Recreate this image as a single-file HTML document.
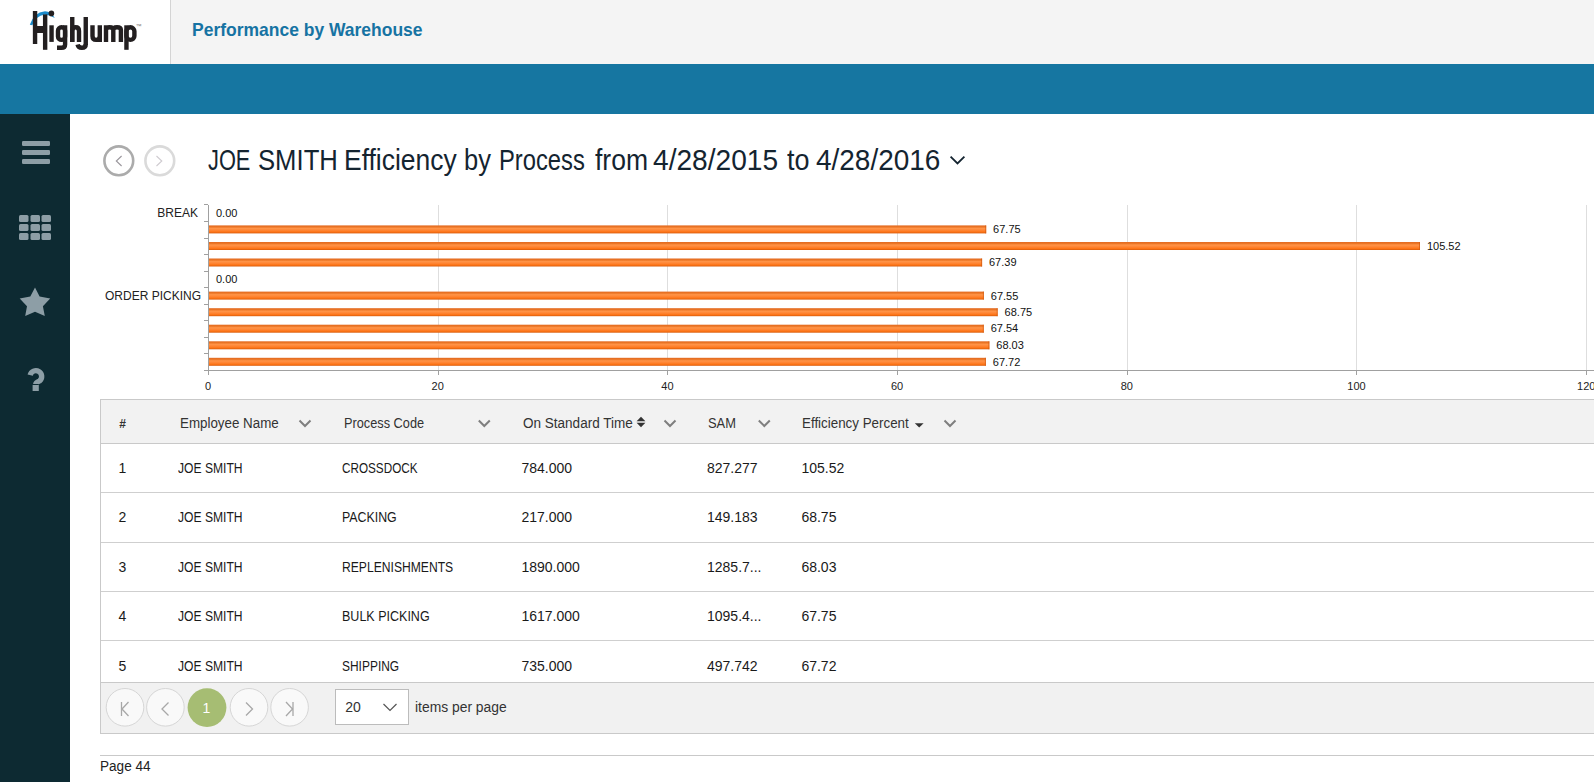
<!DOCTYPE html>
<html><head><meta charset="utf-8">
<style>
*{margin:0;padding:0;box-sizing:border-box}
html,body{width:1594px;height:782px;overflow:hidden;background:#fff;font-family:"Liberation Sans",sans-serif;color:#1b2730}
.abs{position:absolute;white-space:nowrap}
.sx{display:inline-block;transform-origin:0 50%;white-space:nowrap}
#hdr{position:absolute;left:0;top:0;width:1594px;height:64px;background:#f4f4f4}
#logo{position:absolute;left:0;top:0;width:171px;height:64px;background:#fff;border-right:1px solid #d4d4d4}
#band{position:absolute;left:0;top:64px;width:1594px;height:50px;background:#1676a1}
#side{position:absolute;left:0;top:114px;width:70px;height:668px;background:#0d2a32}
.th{font-size:14px;color:#2b2b2b;top:414px}
.td{font-size:14px;color:#1a1a1a}
.hl{position:absolute;height:1px;background:#cfcfcf}
</style></head><body>
<div id="hdr"></div>
<div id="logo">
<svg width="170" height="64" style="position:absolute;left:0;top:0">
 <path d="M29.8 24.8Q33.5 12.6 45 11.2Q51 11.2 54.8 18Q49 14.4 44 14.7Q36.5 15.6 32.3 25.2Z" fill="#1b8bcb"/>
 <g fill="#231f20">
  <rect x="32.85" y="11" width="4.4" height="33"/>
  <rect x="36" y="26" width="8" height="7"/>
  <rect x="42.95" y="14.4" width="4.4" height="35.4"/>
  <rect x="49.35" y="25.3" width="4.4" height="16.6"/>
  
  <rect x="70.05" y="17" width="4.4" height="24.9"/>
  <rect x="83.55" y="17" width="4.4" height="28"/>
  <rect x="124.25" y="25.3" width="4.4" height="24.5"/>
 </g>
 <g fill="none" stroke="#231f20" stroke-width="4.4">
  <rect x="58" y="27.3" width="7.1" height="12.6" rx="3.5"/>
  <path d="M65.1 25.3V44.5Q65.1 47.8 61.5 47.8H57"/>
  <path d="M72.2 41.9V31Q72.2 27.3 75.6 27.3Q79 27.3 79 31V41.9"/>
  <path d="M85.8 44Q85.8 47.8 81.8 47.8Q78.2 47.8 77.6 44.5"/>
  <path d="M92.5 25.3V36Q92.5 39.9 96.1 39.9Q99.8 39.9 99.8 36V25.3M99.8 30V41.9"/>
  <path d="M106 41.9V25.3M106 30Q106 27.3 109.5 27.3Q113.3 27.3 113.3 30V41.9M113.3 30Q113.3 27.3 117 27.3Q120.9 27.3 120.9 30V41.9"/>
  <rect x="126.4" y="27.3" width="8" height="12.6" rx="4"/>
 </g>
  <circle cx="51.4" cy="13.4" r="2.8" fill="#231f20"/>
 <text x="135.6" y="27.6" font-size="6" fill="#777" font-family="Liberation Sans">™</text>
</svg>
</div>
<div class="abs" style="left:191.6px;top:19px;font-size:19px;font-weight:bold;color:#1673a3"><span class="sx" id="t_perf" style="transform:scaleX(0.92)">Performance by Warehouse</span></div>
<div id="band"></div>
<div id="side">
 <svg width="70" height="300" style="position:absolute;left:0;top:0">
  <g fill="#8d9ea6">
   <rect x="22" y="27" width="28" height="5" rx="1.3"/>
   <rect x="22" y="36" width="28" height="5" rx="1.3"/>
   <rect x="22" y="45" width="28" height="5" rx="1.3"/>
   <rect x="19" y="101" width="9.5" height="7" rx="1.5"/>
   <rect x="30.5" y="101" width="9.5" height="7" rx="1.5"/>
   <rect x="41.5" y="101" width="9.5" height="7" rx="1.5"/>
   <rect x="19" y="110" width="9.5" height="7" rx="1.5"/>
   <rect x="30.5" y="110" width="9.5" height="7" rx="1.5"/>
   <rect x="41.5" y="110" width="9.5" height="7" rx="1.5"/>
   <rect x="19" y="119" width="9.5" height="7" rx="1.5"/>
   <rect x="30.5" y="119" width="9.5" height="7" rx="1.5"/>
   <rect x="41.5" y="119" width="9.5" height="7" rx="1.5"/>
   <path d="M35.0 173.5L39.6 182.6L50.2 184.6L42.9 192.3L44.8 202.0L35.0 197.8L25.2 202.0L27.0 192.3L19.7 184.6L30.3 182.6Z"/>
  </g>
 </svg>
 <svg width="70" height="60" style="position:absolute;left:0;top:240px"><path d="M30.2 21.2A5.8 5.8 0 1 1 39.6 26.9Q35.8 28.6 35.8 30" fill="none" stroke="#8d9ea6" stroke-width="5.4"/><rect x="32.6" y="31" width="6.2" height="6" fill="#8d9ea6"/></svg>
</div>

<!-- title -->
<svg width="80" height="40" style="position:absolute;left:100px;top:142px">
 <circle cx="18.8" cy="18.8" r="14.4" fill="none" stroke="#ababab" stroke-width="2.6"/>
 <path d="M21.6 14L16.3 19L21.6 24" fill="none" stroke="#9a969c" stroke-width="1.1"/>
 <circle cx="59.8" cy="18.8" r="14.4" fill="none" stroke="#dadada" stroke-width="2.6"/>
 <path d="M56.5 14L61.8 19L56.5 24" fill="none" stroke="#cfcbd0" stroke-width="1.1"/>
</svg>
<div class="abs" style="left:207.5px;top:144px;font-size:29px;color:#142430"><span class="sx" style="transform:scaleX(0.752)">JOE</span></div>
<div class="abs" style="left:257.5px;top:144px;font-size:29px;color:#142430"><span class="sx" style="transform:scaleX(0.885)">SMITH</span></div>
<div class="abs" style="left:344.1px;top:144px;font-size:29px;color:#142430"><span class="sx" style="transform:scaleX(0.912)">Efficiency</span></div>
<div class="abs" style="left:464.0px;top:144px;font-size:29px;color:#142430"><span class="sx" style="transform:scaleX(0.879)">by</span></div>
<div class="abs" style="left:498.9px;top:144px;font-size:29px;color:#142430"><span class="sx" style="transform:scaleX(0.819)">Process</span></div>
<div class="abs" style="left:594.9px;top:144px;font-size:29px;color:#142430"><span class="sx" style="transform:scaleX(0.914)">from</span></div>
<div class="abs" style="left:653.0px;top:144px;font-size:29px;color:#142430"><span class="sx" style="transform:scaleX(0.97)">4/28/2015</span></div>
<div class="abs" style="left:786.8px;top:144px;font-size:29px;color:#142430"><span class="sx" style="transform:scaleX(0.93)">to</span></div>
<div class="abs" style="left:815.6px;top:144px;font-size:29px;color:#142430"><span class="sx" style="transform:scaleX(0.964)">4/28/2016</span></div>
<svg width="20" height="14" style="position:absolute;left:948px;top:154px">
 <path d="M2.6 2.6L9.5 9.5L16.4 2.6" fill="none" stroke="#142430" stroke-width="1.8"/>
</svg>

<!-- chart -->
<svg id="chart" width="1494" height="200" style="position:absolute;left:100px;top:195px;font-family:'Liberation Sans'">
<defs><linearGradient id="bg" x1="0" y1="0" x2="0" y2="1"><stop offset="0" stop-color="#e26a22"/><stop offset="0.18" stop-color="#ea7424"/><stop offset="0.38" stop-color="#ff9448"/><stop offset="0.62" stop-color="#ff8432"/><stop offset="0.82" stop-color="#fd7416"/><stop offset="1" stop-color="#d65b0c"/></linearGradient></defs><rect x="338" y="10" width="1" height="165" fill="#dedede"/>
<rect x="338" y="175" width="1" height="5" fill="#a0a0a0"/>
<rect x="567" y="10" width="1" height="165" fill="#dedede"/>
<rect x="567" y="175" width="1" height="5" fill="#a0a0a0"/>
<rect x="797" y="10" width="1" height="165" fill="#dedede"/>
<rect x="797" y="175" width="1" height="5" fill="#a0a0a0"/>
<rect x="1027" y="10" width="1" height="165" fill="#dedede"/>
<rect x="1027" y="175" width="1" height="5" fill="#a0a0a0"/>
<rect x="1256" y="10" width="1" height="165" fill="#dedede"/>
<rect x="1256" y="175" width="1" height="5" fill="#a0a0a0"/>
<rect x="1486" y="10" width="1" height="165" fill="#dedede"/>
<rect x="1486" y="175" width="1" height="5" fill="#a0a0a0"/>
<text x="116.0" y="21.5" font-size="11" fill="#111">0.00</text>
<rect x="109" y="30.4" width="777.2" height="8" fill="url(#bg)"/><rect x="885.2" y="30.4" width="1" height="8" fill="#d25a10" opacity="0.7"/>
<text x="893.1" y="38.0" font-size="11" fill="#111">67.75</text>
<rect x="109" y="47.0" width="1211.0" height="8" fill="url(#bg)"/><rect x="1319.0" y="47.0" width="1" height="8" fill="#d25a10" opacity="0.7"/>
<text x="1326.9" y="54.6" font-size="11" fill="#111">105.52</text>
<rect x="109" y="63.5" width="773.1" height="8" fill="url(#bg)"/><rect x="881.1" y="63.5" width="1" height="8" fill="#d25a10" opacity="0.7"/>
<text x="889.0" y="71.1" font-size="11" fill="#111">67.39</text>
<text x="116.0" y="87.7" font-size="11" fill="#111">0.00</text>
<rect x="109" y="96.6" width="774.9" height="8" fill="url(#bg)"/><rect x="882.9" y="96.6" width="1" height="8" fill="#d25a10" opacity="0.7"/>
<text x="890.8" y="105.2" font-size="11" fill="#111">67.55</text>
<rect x="109" y="113.2" width="788.7" height="8" fill="url(#bg)"/><rect x="896.7" y="113.2" width="1" height="8" fill="#d25a10" opacity="0.7"/>
<text x="904.6" y="120.8" font-size="11" fill="#111">68.75</text>
<rect x="109" y="129.7" width="774.8" height="8" fill="url(#bg)"/><rect x="882.8" y="129.7" width="1" height="8" fill="#d25a10" opacity="0.7"/>
<text x="890.7" y="137.3" font-size="11" fill="#111">67.54</text>
<rect x="109" y="146.3" width="780.4" height="8" fill="url(#bg)"/><rect x="888.4" y="146.3" width="1" height="8" fill="#d25a10" opacity="0.7"/>
<text x="896.3" y="153.9" font-size="11" fill="#111">68.03</text>
<rect x="109" y="162.8" width="776.9" height="8" fill="url(#bg)"/><rect x="884.9" y="162.8" width="1" height="8" fill="#d25a10" opacity="0.7"/>
<text x="892.8" y="171.4" font-size="11" fill="#111">67.72</text>
<rect x="104" y="9" width="4" height="1" fill="#a0a0a0"/>
<rect x="104" y="26" width="4" height="1" fill="#a0a0a0"/>
<rect x="104" y="43" width="4" height="1" fill="#a0a0a0"/>
<rect x="104" y="59" width="4" height="1" fill="#a0a0a0"/>
<rect x="104" y="76" width="4" height="1" fill="#a0a0a0"/>
<rect x="104" y="92" width="4" height="1" fill="#a0a0a0"/>
<rect x="104" y="109" width="4" height="1" fill="#a0a0a0"/>
<rect x="104" y="125" width="4" height="1" fill="#a0a0a0"/>
<rect x="104" y="142" width="4" height="1" fill="#a0a0a0"/>
<rect x="104" y="158" width="4" height="1" fill="#a0a0a0"/>
<rect x="104" y="175" width="4" height="1" fill="#a0a0a0"/>
<rect x="108" y="10" width="1" height="170" fill="#a0a0a0"/>
<rect x="108" y="175" width="1400" height="1" fill="#a0a0a0"/>
<text x="108.0" y="195.0" font-size="11" fill="#222" text-anchor="middle">0</text>
<text x="337.7" y="195.0" font-size="11" fill="#222" text-anchor="middle">20</text>
<text x="567.4" y="195.0" font-size="11" fill="#222" text-anchor="middle">40</text>
<text x="797.1" y="195.0" font-size="11" fill="#222" text-anchor="middle">60</text>
<text x="1026.8" y="195.0" font-size="11" fill="#222" text-anchor="middle">80</text>
<text x="1256.5" y="195.0" font-size="11" fill="#222" text-anchor="middle">100</text>
<text x="1486.2" y="195.0" font-size="11" fill="#222" text-anchor="middle">120</text>
<text x="98" y="22" font-size="12" fill="#222" text-anchor="end">BREAK</text>
<text x="101" y="104.5" font-size="12" fill="#222" text-anchor="end">ORDER PICKING</text>
</svg>

<!-- table -->
<div style="position:absolute;left:100px;top:399px;width:1500px;height:335px;border:1px solid #c9c9c9;border-right:none">
 <div style="position:absolute;left:0;top:0;width:100%;height:44px;background:#f2f2f2;border-bottom:1px solid #c9c9c9"></div>
 <div class="hl" style="left:0;top:92px;width:100%"></div>
 <div class="hl" style="left:0;top:142px;width:100%"></div>
 <div class="hl" style="left:0;top:191px;width:100%"></div>
 <div class="hl" style="left:0;top:240px;width:100%"></div>
 <div style="position:absolute;left:0;top:282px;width:100%;height:51px;background:#f1f1f1;border-top:1px solid #c9c9c9"></div>
</div>
<svg width="1000" height="30" style="position:absolute;left:0;top:408px">
 <g fill="none" stroke="#7f7f7f" stroke-width="2">
  <path d="M299.5 12.5L305 18L310.5 12.5"/>
  <path d="M478.8 12.5L484.3 18L489.8 12.5"/>
  <path d="M664.5 12.5L670 18L675.5 12.5"/>
  <path d="M758.8 12.5L764.3 18L769.8 12.5"/>
  <path d="M944.5 12.5L950 18L955.5 12.5"/>
 </g>
 <g fill="#333">
  <path d="M636.6 13.2L641 8.8L645.4 13.2Z"/>
  <path d="M636.6 14.8L641 19.2L645.4 14.8Z"/>
  <path d="M914.8 15.2L919.2 19.6L923.6 15.2Z"/>
 </g>
</svg>
<svg width="420" height="50" style="position:absolute;left:100px;top:683px">
 <g fill="#f9f9f9" stroke="#d6d6d6" stroke-width="1">
  <circle cx="25" cy="24.3" r="18.8"/>
  <circle cx="65.4" cy="24.3" r="18.8"/>
  <circle cx="149" cy="24.3" r="18.8"/>
  <circle cx="189.6" cy="24.3" r="18.8"/>
 </g>
 <circle cx="107" cy="24.6" r="19.4" fill="#a6bd73"/>
 <g fill="none" stroke="#a8a8a8" stroke-width="1.3">
  <path d="M21.5 19V33M28.5 19L22 26L28.5 33"/>
  <path d="M68.5 19.5L62 26L68.5 32.5"/>
  <path d="M146 19.5L152.5 26L146 32.5"/>
  <path d="M193 19V33M186 19L192.5 26L186 33"/>
 </g>
 <rect x="235.5" y="6.5" width="73" height="35" fill="#fff" stroke="#bcbcbc"/>
 <path d="M283.5 21L290 27.5L296.5 21" fill="none" stroke="#555" stroke-width="1.2"/>
</svg>
<!--TABLETEXT-->
<div class="abs" style="left:345.3px;top:698.8px;font-size:14px;line-height:16px;color:#333;font-weight:normal"><span class="sx" style="transform:scaleX(1.000)">20</span></div>
<div class="abs" style="left:414.6px;top:698.5px;font-size:14px;line-height:16px;color:#333;font-weight:normal"><span class="sx" style="transform:scaleX(0.990)">items per page</span></div>
<div class="abs" style="left:202.5px;top:700.4px;font-size:14px;line-height:16px;color:#fff;font-weight:normal"><span class="sx" style="transform:scaleX(1.000)">1</span></div>
<div class="abs" style="left:119.3px;top:415.8px;font-size:12px;line-height:16px;color:#333;font-weight:bold"><span class="sx" style="transform:scaleX(1.000)">#</span></div>
<div class="abs" style="left:179.5px;top:415.1px;font-size:14px;line-height:16px;color:#333;font-weight:normal"><span class="sx" style="transform:scaleX(0.954)">Employee Name</span></div>
<div class="abs" style="left:344.4px;top:415.1px;font-size:14px;line-height:16px;color:#333;font-weight:normal"><span class="sx" style="transform:scaleX(0.911)">Process Code</span></div>
<div class="abs" style="left:522.5px;top:415.1px;font-size:14px;line-height:16px;color:#333;font-weight:normal"><span class="sx" style="transform:scaleX(0.966)">On Standard Time</span></div>
<div class="abs" style="left:707.6px;top:415.1px;font-size:14px;line-height:16px;color:#333;font-weight:normal"><span class="sx" style="transform:scaleX(0.920)">SAM</span></div>
<div class="abs" style="left:802.3px;top:415.1px;font-size:14px;line-height:16px;color:#333;font-weight:normal"><span class="sx" style="transform:scaleX(0.955)">Efficiency Percent</span></div>
<div class="abs" style="left:118.5px;top:460.1px;font-size:14px;line-height:16px;color:#1a1a1a;font-weight:normal"><span class="sx" style="transform:scaleX(1.000)">1</span></div>
<div class="abs" style="left:178.3px;top:460.1px;font-size:14px;line-height:16px;color:#1a1a1a;font-weight:normal"><span class="sx" style="transform:scaleX(0.865)">JOE SMITH</span></div>
<div class="abs" style="left:342.0px;top:460.1px;font-size:14px;line-height:16px;color:#1a1a1a;font-weight:normal"><span class="sx" style="transform:scaleX(0.837)">CROSSDOCK</span></div>
<div class="abs" style="left:521.4px;top:460.1px;font-size:14px;line-height:16px;color:#1a1a1a;font-weight:normal"><span class="sx" style="transform:scaleX(1.000)">784.000</span></div>
<div class="abs" style="left:707.0px;top:460.1px;font-size:14px;line-height:16px;color:#1a1a1a;font-weight:normal"><span class="sx" style="transform:scaleX(1.000)">827.277</span></div>
<div class="abs" style="left:801.4px;top:460.1px;font-size:14px;line-height:16px;color:#1a1a1a;font-weight:normal"><span class="sx" style="transform:scaleX(1.000)">105.52</span></div>
<div class="abs" style="left:118.5px;top:509.1px;font-size:14px;line-height:16px;color:#1a1a1a;font-weight:normal"><span class="sx" style="transform:scaleX(1.000)">2</span></div>
<div class="abs" style="left:178.3px;top:509.1px;font-size:14px;line-height:16px;color:#1a1a1a;font-weight:normal"><span class="sx" style="transform:scaleX(0.865)">JOE SMITH</span></div>
<div class="abs" style="left:342.0px;top:509.1px;font-size:14px;line-height:16px;color:#1a1a1a;font-weight:normal"><span class="sx" style="transform:scaleX(0.883)">PACKING</span></div>
<div class="abs" style="left:521.4px;top:509.1px;font-size:14px;line-height:16px;color:#1a1a1a;font-weight:normal"><span class="sx" style="transform:scaleX(1.000)">217.000</span></div>
<div class="abs" style="left:707.0px;top:509.1px;font-size:14px;line-height:16px;color:#1a1a1a;font-weight:normal"><span class="sx" style="transform:scaleX(1.000)">149.183</span></div>
<div class="abs" style="left:801.4px;top:509.1px;font-size:14px;line-height:16px;color:#1a1a1a;font-weight:normal"><span class="sx" style="transform:scaleX(1.000)">68.75</span></div>
<div class="abs" style="left:118.5px;top:559.1px;font-size:14px;line-height:16px;color:#1a1a1a;font-weight:normal"><span class="sx" style="transform:scaleX(1.000)">3</span></div>
<div class="abs" style="left:178.3px;top:559.1px;font-size:14px;line-height:16px;color:#1a1a1a;font-weight:normal"><span class="sx" style="transform:scaleX(0.865)">JOE SMITH</span></div>
<div class="abs" style="left:342.0px;top:559.1px;font-size:14px;line-height:16px;color:#1a1a1a;font-weight:normal"><span class="sx" style="transform:scaleX(0.866)">REPLENISHMENTS</span></div>
<div class="abs" style="left:521.4px;top:559.1px;font-size:14px;line-height:16px;color:#1a1a1a;font-weight:normal"><span class="sx" style="transform:scaleX(1.000)">1890.000</span></div>
<div class="abs" style="left:707.0px;top:559.1px;font-size:14px;line-height:16px;color:#1a1a1a;font-weight:normal"><span class="sx" style="transform:scaleX(1.000)">1285.7...</span></div>
<div class="abs" style="left:801.4px;top:559.1px;font-size:14px;line-height:16px;color:#1a1a1a;font-weight:normal"><span class="sx" style="transform:scaleX(1.000)">68.03</span></div>
<div class="abs" style="left:118.5px;top:608.1px;font-size:14px;line-height:16px;color:#1a1a1a;font-weight:normal"><span class="sx" style="transform:scaleX(1.000)">4</span></div>
<div class="abs" style="left:178.3px;top:608.1px;font-size:14px;line-height:16px;color:#1a1a1a;font-weight:normal"><span class="sx" style="transform:scaleX(0.865)">JOE SMITH</span></div>
<div class="abs" style="left:342.0px;top:608.1px;font-size:14px;line-height:16px;color:#1a1a1a;font-weight:normal"><span class="sx" style="transform:scaleX(0.894)">BULK PICKING</span></div>
<div class="abs" style="left:521.4px;top:608.1px;font-size:14px;line-height:16px;color:#1a1a1a;font-weight:normal"><span class="sx" style="transform:scaleX(1.000)">1617.000</span></div>
<div class="abs" style="left:707.0px;top:608.1px;font-size:14px;line-height:16px;color:#1a1a1a;font-weight:normal"><span class="sx" style="transform:scaleX(1.000)">1095.4...</span></div>
<div class="abs" style="left:801.4px;top:608.1px;font-size:14px;line-height:16px;color:#1a1a1a;font-weight:normal"><span class="sx" style="transform:scaleX(1.000)">67.75</span></div>
<div class="abs" style="left:118.5px;top:658.1px;font-size:14px;line-height:16px;color:#1a1a1a;font-weight:normal"><span class="sx" style="transform:scaleX(1.000)">5</span></div>
<div class="abs" style="left:178.3px;top:658.1px;font-size:14px;line-height:16px;color:#1a1a1a;font-weight:normal"><span class="sx" style="transform:scaleX(0.865)">JOE SMITH</span></div>
<div class="abs" style="left:342.0px;top:658.1px;font-size:14px;line-height:16px;color:#1a1a1a;font-weight:normal"><span class="sx" style="transform:scaleX(0.854)">SHIPPING</span></div>
<div class="abs" style="left:521.4px;top:658.1px;font-size:14px;line-height:16px;color:#1a1a1a;font-weight:normal"><span class="sx" style="transform:scaleX(1.000)">735.000</span></div>
<div class="abs" style="left:707.0px;top:658.1px;font-size:14px;line-height:16px;color:#1a1a1a;font-weight:normal"><span class="sx" style="transform:scaleX(1.000)">497.742</span></div>
<div class="abs" style="left:801.4px;top:658.1px;font-size:14px;line-height:16px;color:#1a1a1a;font-weight:normal"><span class="sx" style="transform:scaleX(1.000)">67.72</span></div>
<div class="hl" style="left:100px;top:755px;width:1494px;background:#c9c9c9"></div>
<div class="abs" style="left:100px;top:758px;font-size:14px;color:#222"><span class="sx" id="t_page" style="transform:scaleX(0.97)">Page 44</span></div>
</body></html>
